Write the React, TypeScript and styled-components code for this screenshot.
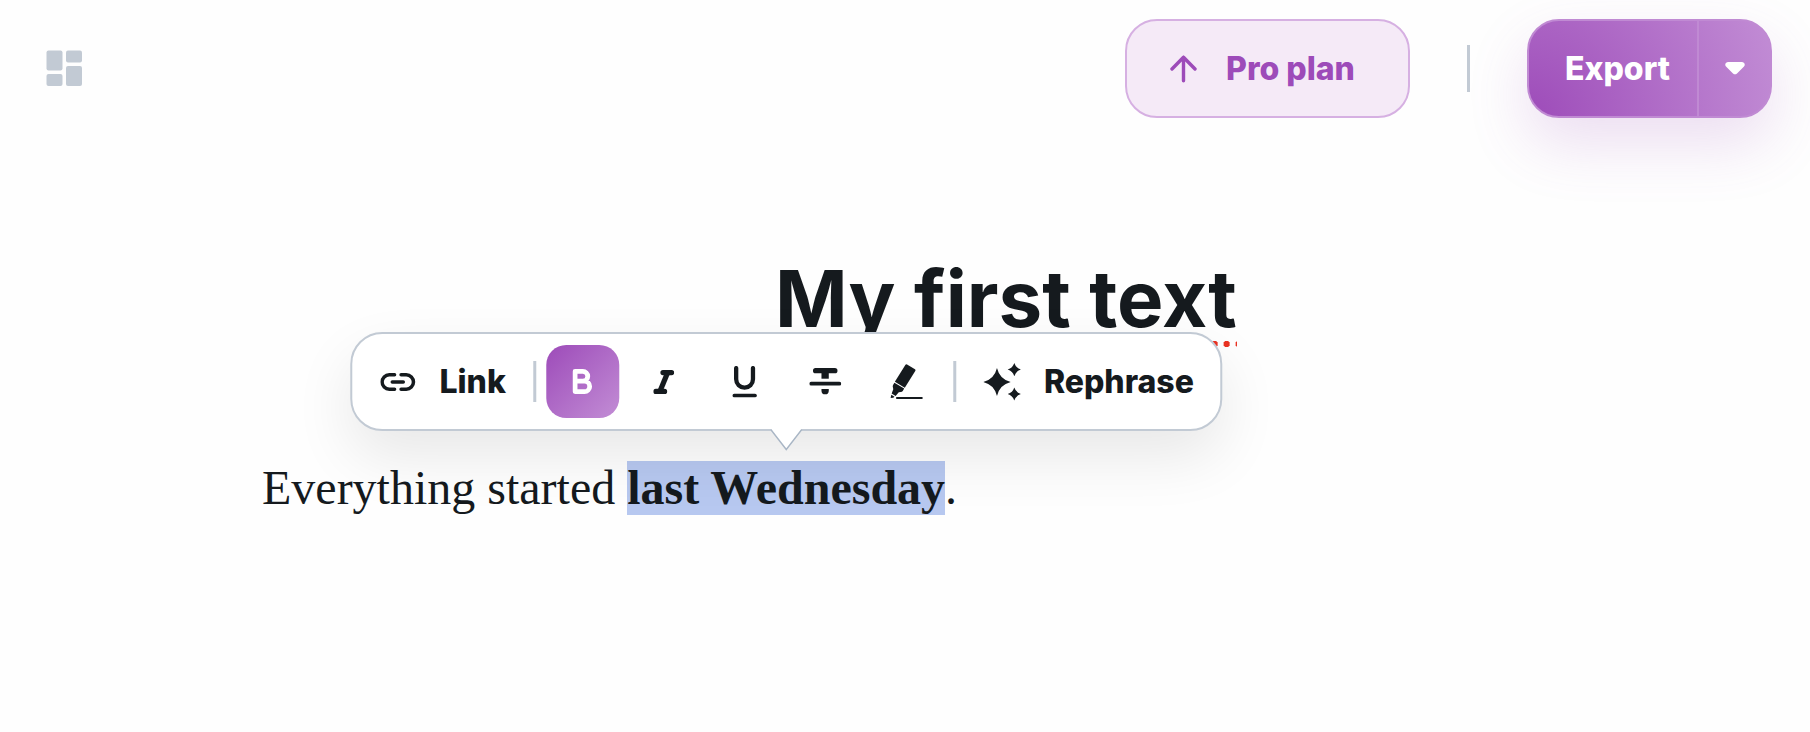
import React from "react";
import styled, { createGlobalStyle, css } from "styled-components";

const ink = "#151a1e";
const line = "#c2cad4";
const purple = "#9d4bb9";
const purpleSoft = "#c28dd5";
const sans = `Inter, "Liberation Sans", sans-serif`;

const GlobalStyle = createGlobalStyle`
  *, *::before, *::after { box-sizing: border-box; }
  body { margin: 0; background: #fefefe; color: ${ink}; font-family: ${sans}; }
  button { margin: 0; padding: 0; border: 0; background: none; color: inherit; font: inherit; cursor: pointer; }
  svg { display: block; flex: none; }
`;

const Page = styled.div`
  min-height: 100vh;
`;

const Header = styled.header`
  display: flex;
  align-items: center;
  justify-content: space-between;
  padding: 19px 38px 0 46px;
`;

const HeaderActions = styled.div`
  display: flex;
  align-items: center;
`;

const buttonText = css`
  font-family: ${sans};
  font-size: 32px;
  line-height: 40px;
  font-weight: 800;
  white-space: nowrap;
`;

const MenuButton = styled.button`
  color: ${line};
`;

const PlanButton = styled.button`
  ${buttonText}
  display: flex;
  align-items: center;
  gap: 29px;
  height: 99px;
  padding: 0 53px 0 43px;
  border: 2px solid #d6b0e2;
  border-radius: 32px;
  background: #f5eaf7;
  color: ${purple};
`;

const HeaderRule = styled.span`
  width: 3px;
  height: 47px;
  margin: 0 57px;
  background: ${line};
`;

const SplitButton = styled.div`
  display: flex;
  height: 99px;
  border: 2px solid #c08ad3;
  border-radius: 32px;
  background: radial-gradient(circle at 0 100%, ${purple}, ${purpleSoft}) border-box;
  box-shadow: 0 26px 60px rgba(157, 75, 185, 0.18);
  color: #fff;
`;

const ExportButton = styled.button`
  ${buttonText}
  padding: 0 27px 0 36px;
`;

const ExportMenuButton = styled.button`
  display: flex;
  align-items: center;
  justify-content: center;
  width: 73px;
  border-left: 2px solid #c08ad3;
`;

const Editor = styled.main`
  padding: 133px 60px 0 262px;
`;

const Title = styled.h1`
  margin: 0;
  font-size: 78px;
  line-height: 96px;
  font-weight: 700;
  text-align: center;
`;

const Misspelled = styled.span`
  position: relative;
  display: inline-block;

  &::after {
    content: "";
    position: absolute;
    left: 0;
    right: 0;
    bottom: 0;
    height: 6px;
    background: radial-gradient(circle at 3px 3px, #ea3323 3px, transparent 3px) right -11px top / 12px 6px;
  }
`;

const Paragraph = styled.p`
  margin: 109px 0 0;
  font-family: "Liberation Serif", serif;
  font-size: 48px;
  line-height: 64px;
`;

const Selection = styled.strong`
  position: relative;
  display: inline-block;
  line-height: 54px;
  font-weight: 700;
  background: #b7c8f0;
`;

const Toolbar = styled.div`
  position: absolute;
  z-index: 1;
  left: 50%;
  bottom: calc(100% + 30px);
  transform: translateX(-50%);
  display: flex;
  align-items: center;
  height: 99px;
  padding: 0 9px 0 11px;
  border: 2px solid ${line};
  border-radius: 32px;
  background: #fff;
  box-shadow: 0 26px 60px rgba(0, 0, 0, 0.09);
`;

const Pointer = styled.svg`
  position: absolute;
  top: 100%;
  left: 50%;
  margin-left: -16px;
`;

const ToolbarRule = styled.span`
  width: 3px;
  height: 41px;
  margin: 0 10px;
  background: ${line};
`;

const TextTool = styled.button`
  ${buttonText}
  display: flex;
  align-items: center;
  gap: 23px;
  height: 73px;
  padding: 0 17px;
  border-radius: 20px;
`;

const IconTools = styled.div`
  display: flex;
  gap: 8px;
`;

const IconTool = styled.button<{ $active?: boolean }>`
  display: flex;
  align-items: center;
  justify-content: center;
  width: 73px;
  height: 73px;
  border-radius: 20px;
  ${({ $active }) =>
    $active &&
    css`
      color: #fff;
      background: linear-gradient(135deg, ${purple}, ${purpleSoft});
    `}
`;

const DashboardIcon = () => (
  <svg width="37" height="37" viewBox="0 0 37 37" fill="currentColor" aria-hidden="true">
    <rect x="0.5" y="0.5" width="16" height="20" rx="2" />
    <rect x="0.5" y="24" width="16" height="12" rx="2" />
    <rect x="20" y="0.5" width="16" height="12" rx="2" />
    <rect x="20" y="16" width="16" height="20" rx="2" />
  </svg>
);

const ArrowUpIcon = () => (
  <svg width="27" height="28" viewBox="0 0 27 28" fill="none" stroke="currentColor" strokeWidth="3.4" strokeLinecap="round" strokeLinejoin="round" aria-hidden="true">
    <path d="M13.5 25.8V2.2M2 14 13.5 2.2 25 14" />
  </svg>
);

const CaretIcon = () => (
  <svg width="20" height="14" viewBox="0 0 20 14" fill="currentColor" aria-hidden="true">
    <path d="M3 0H17A2.7 2.7 0 0 1 19 4.5L12 11.4A2.9 2.9 0 0 1 8 11.4L1 4.5A2.7 2.7 0 0 1 3 0Z" />
  </svg>
);

const LinkIcon = () => (
  <svg width="36" height="18" viewBox="0 0 36 18" fill="none" stroke="currentColor" strokeWidth="3.5" strokeLinecap="round" aria-hidden="true">
    <path d="M14.3 1.8H9A7.2 7.2 0 0 0 9 16.2H14.3M20.8 1.8H26A7.2 7.2 0 0 1 26 16.2H20.8M12 9H23" />
  </svg>
);

const BoldIcon = () => (
  <svg width="20" height="25" viewBox="0 0 20 25" fill="none" stroke="currentColor" strokeWidth="4.8" strokeLinejoin="round" aria-hidden="true">
    <path d="M2.8 2.4H10.6A4.9 4.9 0 0 1 10.6 12.2H2.8ZM2.8 12.2H12.2A5.2 5.2 0 0 1 12.2 22.6H2.8Z" />
  </svg>
);

const ItalicIcon = () => (
  <svg width="21" height="24" viewBox="0 0 21 24" fill="none" stroke="currentColor" strokeWidth="5.2" strokeLinecap="round" aria-hidden="true">
    <path d="M9.7 2.6H18.3M2.6 21.4H11.3" />
    <path d="M14 3.5 7 20.5" strokeLinecap="butt" />
  </svg>
);

const UnderlineIcon = () => (
  <svg width="25" height="32" viewBox="0 0 25 32" fill="none" stroke="currentColor" strokeLinecap="round" aria-hidden="true">
    <path d="M3.9 2.1V13.3A8.4 8.4 0 0 0 20.7 13.3V2.1" strokeWidth="4.3" />
    <path d="M2 29.5H22.7" strokeWidth="3.7" />
  </svg>
);

const StrikeIcon = () => (
  <svg width="32" height="27" viewBox="0 0 32 27" fill="currentColor" aria-hidden="true">
    <rect x="3.7" y="0" width="24.5" height="5.3" rx="2.6" />
    <rect x="12.2" y="4" width="7.3" height="6.7" />
    <rect x="0" y="13.8" width="32" height="3.8" rx="1.9" />
    <path d="M12.2 21H19.5V22.7A3.65 3.65 0 0 1 12.2 22.7Z" />
  </svg>
);

const MarkerIcon = () => (
  <svg width="33" height="36" viewBox="0 0 33 36" fill="currentColor" aria-hidden="true">
    <path d="M15.2 0.8Q15.8 -0.1 16.8 0.4L24.7 5.3Q25.6 6 25 7L14.5 23.7 4.6 17.7Z" />
    <path d="M4.1 18.7 13.9 24.6 12.5 27Q11.8 28 10.5 28L8.5 28.2 5.3 32 1.4 29.6 3 25.2 2.5 22.8Q2.3 22 2.8 21Z" />
    <path d="M1.1 30.8 4.2 32.7 3 33.7 0.2 34Z" />
    <path d="M6.6 34H31.6" fill="none" stroke="currentColor" strokeWidth="1.8" strokeLinecap="round" />
  </svg>
);

const SparklesIcon = () => (
  <svg width="38" height="38" viewBox="0 0 38 38" fill="currentColor" aria-hidden="true">
    <path d="M13.7 5Q16.4 16.3 27.4 19 16.4 21.7 13.7 33 11 21.7 0 19 11 16.3 13.7 5Z" />
    <path d="M31 0Q32.6 5 37.6 6.6 32.6 8.2 31 13.2 29.4 8.2 24.4 6.6 29.4 5 31 0Z" />
    <path d="M31 24.4Q32.6 29.4 37.6 31 32.6 32.6 31 37.6 29.4 32.6 24.4 31 29.4 29.4 31 24.4Z" />
  </svg>
);

const SelectionToolbar = () => (
  <Toolbar role="toolbar" aria-label="Text formatting">
    <TextTool type="button">
      <LinkIcon />
      Link
    </TextTool>
    <ToolbarRule />
    <IconTools>
      <IconTool type="button" aria-label="Bold" aria-pressed="true" $active>
        <BoldIcon />
      </IconTool>
      <IconTool type="button" aria-label="Italic">
        <ItalicIcon />
      </IconTool>
      <IconTool type="button" aria-label="Underline">
        <UnderlineIcon />
      </IconTool>
      <IconTool type="button" aria-label="Strikethrough">
        <StrikeIcon />
      </IconTool>
      <IconTool type="button" aria-label="Highlight">
        <MarkerIcon />
      </IconTool>
    </IconTools>
    <ToolbarRule />
    <TextTool type="button">
      <SparklesIcon />
      Rephrase
    </TextTool>
    <Pointer width="32" height="22" viewBox="0 0 32 22" aria-hidden="true">
      <path d="M0.5 0 16 20.5 31.5 0Z" fill="#fff" />
      <path d="M0.5 0.5 16 20.5 31.5 0.5" fill="none" stroke="#a9b6c5" strokeWidth="1.4" />
    </Pointer>
  </Toolbar>
);

export default function App() {
  return (
    <Page>
      <GlobalStyle />
      <Header>
        <MenuButton type="button" aria-label="Dashboard">
          <DashboardIcon />
        </MenuButton>
        <HeaderActions>
          <PlanButton type="button">
            <ArrowUpIcon />
            Pro plan
          </PlanButton>
          <HeaderRule />
          <SplitButton>
            <ExportButton type="button">Export</ExportButton>
            <ExportMenuButton type="button" aria-label="Export options">
              <CaretIcon />
            </ExportMenuButton>
          </SplitButton>
        </HeaderActions>
      </Header>
      <Editor>
        <Title>
          My first <Misspelled>text</Misspelled>
        </Title>
        <Paragraph>
          Everything started{" "}
          <Selection>
            last Wednesday
            <SelectionToolbar />
          </Selection>
          .
        </Paragraph>
      </Editor>
    </Page>
  );
}
